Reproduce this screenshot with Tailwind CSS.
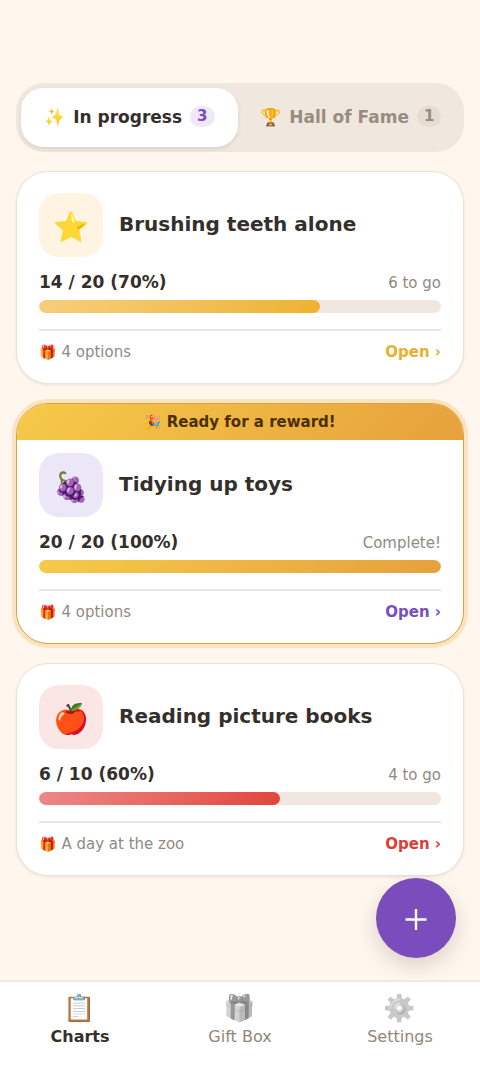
<!DOCTYPE html>
<html lang="en">
<head>
<meta charset="utf-8">
<meta name="viewport" content="width=device-width, initial-scale=1">
<title>Reward charts</title>
<script src="https://cdn.jsdelivr.net/npm/@tailwindcss/browser@4"></script>
</head>
<body class="flex min-h-screen flex-col bg-[#fff6ed] font-['DejaVu_Sans','Noto_Color_Emoji',sans-serif] text-[#352f2c]">
<main class="flex flex-1 flex-col gap-[19px] px-4 pt-[83px] pb-48">
  <div role="tablist" aria-label="Charts" class="flex gap-[5px] rounded-[28px] bg-[#f0e8df] p-[5px]">
    <button role="tab" aria-selected="true" class="flex h-[59px] flex-1 items-center justify-center gap-2 rounded-[22px] bg-white pb-[2px] text-[17px] leading-6 font-bold whitespace-nowrap shadow-[0_2px_4px_rgba(53,47,44,0.12)]"><span>✨</span><span>In progress</span><span class="rounded-full bg-[#eee8f8] px-[7px] text-[15px] leading-[21px] text-[#7a4dbf]">3</span></button>
    <button role="tab" aria-selected="false" class="flex h-[59px] flex-1 items-center justify-center gap-2 rounded-[22px] pb-[2px] text-[17px] leading-6 font-bold whitespace-nowrap text-[#998c80]"><span>🏆</span><span>Hall of Fame</span><span class="rounded-full bg-[#e6dcd2] px-[7px] text-[15px] leading-[21px]">1</span></button>
  </div>

  <article class="rounded-[32px] border border-[#ebe2d7] bg-white px-[22px] py-[21px] shadow-[0_1px_3px_rgba(53,47,44,0.10)]">
    <div class="flex items-center gap-4">
      <span class="flex size-16 items-center justify-center rounded-[20px] bg-[#fff4e2] pt-[3px] text-[29px] leading-10">⭐</span>
      <h2 class="pb-[2px] text-xl font-bold">Brushing teeth alone</h2>
    </div>
    <div class="mt-[13px] flex h-6 items-baseline justify-between leading-6"><span class="text-[17px] font-bold">14 / 20 (70%)</span><span class="text-[15px] text-[#918983]">6 to go</span></div>
    <div class="mt-[6px] h-[13px] overflow-hidden rounded-full bg-[#f0e8e0]"><div class="h-full rounded-full bg-linear-135 from-[#f6cf7b] to-[#edb22c]" style="width:70%"></div></div>
    <div class="mt-4 flex items-center justify-between border-t-2 border-[#ebe5df] pt-[11px] text-[15px] leading-5"><span class="flex items-center gap-[5px] text-[#918983]"><span class="text-sm leading-5">🎁</span>4 options</span><a href="#brushing" class="font-bold text-[#e9b02c]">Open ›</a></div>
  </article>

  <article class="overflow-hidden rounded-[32px] border border-[#dba33c] bg-white shadow-[0_0_0_4px_#f9e3c0]">
    <p class="flex h-9 items-center justify-center gap-[5px] bg-linear-135 from-[#f6ca49] to-[#e6a03c] text-[15px] leading-5 font-bold text-[#4a3006]"><span class="text-sm leading-5">🎉</span>Ready for a reward!</p>
    <div class="px-[22px] pt-[13px] pb-[21px]">
      <div class="flex items-center gap-4">
        <span class="flex size-16 items-center justify-center rounded-[20px] bg-[#ece7f7] pt-[3px] text-[29px] leading-10">🍇</span>
        <h2 class="pb-[2px] text-xl font-bold">Tidying up toys</h2>
      </div>
      <div class="mt-[13px] flex h-6 items-baseline justify-between leading-6"><span class="text-[17px] font-bold">20 / 20 (100%)</span><span class="text-[15px] text-[#918983]">Complete!</span></div>
      <div class="mt-[6px] h-[13px] overflow-hidden rounded-full bg-[#f0e8e0]"><div class="h-full rounded-full bg-linear-135 from-[#f6ca49] to-[#e6a03c]" style="width:100%"></div></div>
      <div class="mt-4 flex items-center justify-between border-t-2 border-[#ebe5df] pt-[11px] text-[15px] leading-5"><span class="flex items-center gap-[5px] text-[#918983]"><span class="text-sm leading-5">🎁</span>4 options</span><a href="#tidying" class="font-bold text-[#7a4dbf]">Open ›</a></div>
    </div>
  </article>

  <article class="rounded-[32px] border border-[#ebe2d7] bg-white px-[22px] py-[21px] shadow-[0_1px_3px_rgba(53,47,44,0.10)]">
    <div class="flex items-center gap-4">
      <span class="flex size-16 items-center justify-center rounded-[20px] bg-[#fae7e5] pt-[3px] text-[29px] leading-10">🍎</span>
      <h2 class="pb-[2px] text-xl font-bold">Reading picture books</h2>
    </div>
    <div class="mt-[13px] flex h-6 items-baseline justify-between leading-6"><span class="text-[17px] font-bold">6 / 10 (60%)</span><span class="text-[15px] text-[#918983]">4 to go</span></div>
    <div class="mt-[6px] h-[13px] overflow-hidden rounded-full bg-[#f0e8e0]"><div class="h-full rounded-full bg-linear-135 from-[#ed8888] to-[#e0433a]" style="width:60%"></div></div>
    <div class="mt-4 flex items-center justify-between border-t-2 border-[#ebe5df] pt-[11px] text-[15px] leading-5"><span class="flex items-center gap-[5px] text-[#918983]"><span class="text-sm leading-5">🎁</span>A day at the zoo</span><a href="#reading" class="font-bold text-[#d94036]">Open ›</a></div>
  </article>
</main>

<button aria-label="Add chart" class="fixed right-6 bottom-[109px] flex size-20 items-center justify-center rounded-full bg-[#7a4dbd] text-white shadow-[0_8px_20px_rgba(53,47,44,0.18)]">
  <svg class="size-6" viewBox="0 0 24 24" fill="none" stroke="currentColor" stroke-width="2.4" aria-hidden="true"><path d="M12 3v21M1.500 13.500h21"/></svg>
</button>

<nav aria-label="Main" class="fixed inset-x-0 bottom-0 grid h-[87px] grid-cols-3 border-t-2 border-[#f0e8df] bg-white pt-2 text-center text-base text-[#918579]">
  <a href="#charts" aria-current="page" class="flex flex-col items-center font-bold text-[#352f2c]"><span class="text-[26px] leading-9">📋</span><span class="leading-[22px]">Charts</span></a>
  <a href="#gifts" class="flex flex-col items-center"><span class="text-[26px] leading-9 opacity-60 grayscale">🎁</span><span class="leading-[22px]">Gift Box</span></a>
  <a href="#settings" class="flex flex-col items-center"><span class="text-[26px] leading-9 opacity-60 grayscale">⚙️</span><span class="leading-[22px]">Settings</span></a>
</nav>
</body>
</html>
